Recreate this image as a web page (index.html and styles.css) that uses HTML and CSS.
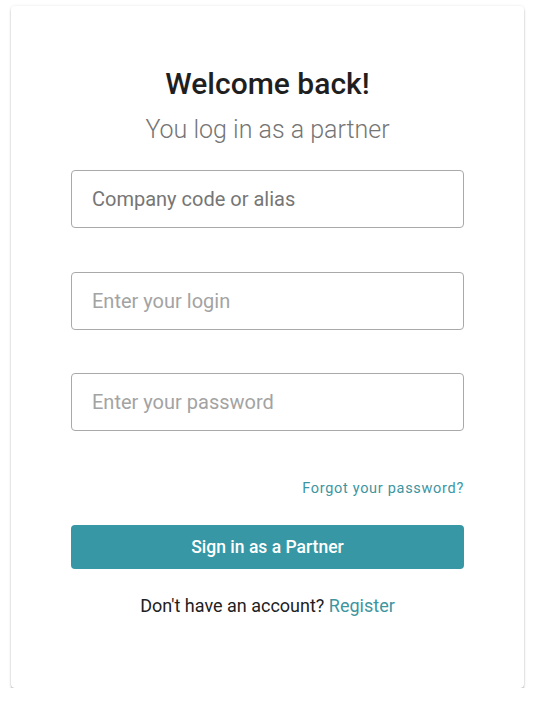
FILE: index.html
```html
<!DOCTYPE html>
<html lang="en">
<head>
<meta charset="utf-8">
<title>Partner sign in</title>
<link rel="stylesheet" href="styles.css">
</head>
<body>
<main class="card">
  <h1 class="title">Welcome back!</h1>
  <p class="subtitle">You log in as a partner</p>
  <form class="form">
    <input class="field field-label" type="text" placeholder="Company code or alias">
    <input class="field" type="text" placeholder="Enter your login">
    <input class="field" type="password" placeholder="Enter your password">
    <div class="forgot-row"><a class="link forgot" href="#">Forgot your password?</a></div>
    <button class="btn" type="button">Sign in as a Partner</button>
  </form>
  <p class="register">Don't have an account? <a class="link" href="#">Register</a></p>
</main>
</body>
</html>
```
FILE: styles.css
```css
html, body {
  margin: 0;
  padding: 0;
  background: #ffffff;
}
body {
  font-family: Roboto, "Liberation Sans", Arial, sans-serif;
  color: #212121;
  padding: 6px 11px 0 11px;
}
.card {
  box-sizing: border-box;
  width: 513px;
  height: 682px;
  background: #fff;
  border-radius: 4px;
  box-shadow: 0 2px 2px rgba(0,0,0,0.25), 0 0 3px rgba(0,0,0,0.10);
  padding: 60px 60px 0 60px;
  display: flex;
  flex-direction: column;
  align-items: stretch;
}
.title {
  margin: 0;
  font-size: 30px;
  font-weight: 500;
  line-height: 36px;
  text-align: center;
  color: #1f1f1f;
}
.subtitle {
  margin: 13px 0 0 0;
  font-size: 25px;
  font-weight: 300;
  line-height: 30px;
  text-align: center;
  color: #757575;
}
.form {
  display: flex;
  flex-direction: column;
  margin-top: 25px;
}
.field {
  box-sizing: border-box;
  height: 58px;
  width: 100%;
  border: 1px solid #a9a9a9;
  border-radius: 4px;
  padding: 0 20px;
  font-family: inherit;
  font-size: 20px;
  color: #212121;
  background: #fff;
  margin-bottom: 43.5px;
  outline: none;
}
.field::placeholder {
  color: #a3a3a3;
}
.field-label::placeholder {
  color: #767676;
}
.forgot-row {
  display: flex;
  justify-content: flex-end;
  margin-top: 4px;
}
.link {
  color: #3d959f;
  text-decoration: none;
}
.forgot {
  font-size: 14.5px;
  letter-spacing: 0.7px;
  line-height: 20px;
}
.btn {
  margin-top: 26px;
  height: 44px;
  border: none;
  border-radius: 4px;
  background: #3797a4;
  color: #fff;
  font-family: inherit;
  font-size: 17.5px;
  font-weight: 500;
  cursor: pointer;
}
.register {
  margin: 26px 0 0 0;
  text-align: center;
  font-size: 18px;
  line-height: 22px;
  color: #212121;
}
```
